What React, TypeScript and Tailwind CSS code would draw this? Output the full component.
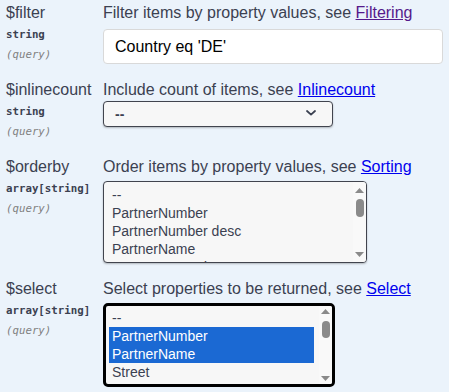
import React from "react";

function Up() {
  return (
    <svg width="9" height="5" viewBox="0 0 9 5" className="block">
      <path d="M4.5 0 L9 5 L0 5 Z" fill="#8a8a8a" />
    </svg>
  );
}
function Down() {
  return (
    <svg width="9" height="5" viewBox="0 0 9 5" className="block">
      <path d="M0 0 L9 0 L4.5 5 Z" fill="#8a8a8a" />
    </svg>
  );
}

function Left({ name, type, cls }: { name: string; type: string; cls?: string }) {
  return (
    <div className={"pl-[6px] " + (cls ?? "")}>
      <div className="text-[16px] leading-[18px] text-[#3b4151]">{name}</div>
      <div
        className="mt-[6px] text-[10.75px] leading-[13px] font-bold text-[#3b4151]"
        style={{ fontFamily: '"DejaVu Sans Mono", monospace' }}
      >
        {type}
      </div>
      <div
        className="mt-[7px] text-[10.75px] leading-[13px] italic text-[#808080]"
        style={{ fontFamily: '"DejaVu Sans Mono", monospace' }}
      >
        (query)
      </div>
    </div>
  );
}

function Desc({ text, link, visited }: { text: string; link: string; visited?: boolean }) {
  return (
    <div className="text-[16px] leading-[18px] text-[#3b4151] whitespace-nowrap">
      {text}
      <span className={visited ? "underline text-[#551a8b]" : "underline text-[#0000ee]"}>{link}</span>
    </div>
  );
}

export default function App() {
  const orderItems = ["--", "PartnerNumber", "PartnerNumber desc", "PartnerName", "PartnerName desc"];
  const selectItems = ["--", "PartnerNumber", "PartnerName", "Street", "City"];
  return (
    <div
      className="w-[449px] h-[392px] overflow-hidden bg-[#ebf3fb] pt-[4px]"
      style={{ fontFamily: '"Liberation Sans", Arial, sans-serif' }}
    >
      {/* $filter */}
      <div className="grid grid-cols-[103px_1fr] items-start">
        <Left name="$filter" type="string" />
        <div>
          <Desc text="Filter items by property values, see " link="Filtering" visited />
          <div className="mt-[7px] w-[340px] h-[35px] bg-white border border-[#d9d9d9] rounded-[4px] pl-[11px] flex items-center text-[16px] text-black">
            Country eq 'DE'
          </div>
        </div>
      </div>

      {/* $inlinecount */}
      <div className="grid grid-cols-[103px_1fr] items-start mt-[17px]">
        <Left name="$inlinecount" type="string" />
        <div>
          <Desc text="Include count of items, see " link="Inlinecount" />
          <div className="mt-[2px] w-[230px] h-[26px] bg-[#f7f7f7] border border-[#41444e] rounded-[4px] shadow-[0_1px_2px_0_rgba(0,0,0,0.25)] pl-[11px] pr-[16px] flex items-center justify-between">
            <span className="text-[14px] font-bold text-[#3b4151]">--</span>
            <svg width="10" height="6" viewBox="0 0 10 6" className="block -mt-[2px]">
              <path d="M1 1 L5 4.6 L9 1" stroke="#3b4151" strokeWidth="1.8" fill="none" strokeLinecap="round" strokeLinejoin="round" />
            </svg>
          </div>
        </div>
      </div>

      {/* $orderby */}
      <div className="grid grid-cols-[103px_1fr] items-start mt-[20px]">
        <Left name="$orderby" type="array[string]" />
        <div>
          <Desc text="Order items by property values, see " link="Sorting" />
          <div className="mt-[5px] w-[264px] h-[82px] bg-[#f7f7f7] border border-[#41444e] rounded-[4px] shadow-[0_1px_2px_0_rgba(0,0,0,0.25)] flex overflow-hidden">
            <div className="flex-1 pl-[5px] pt-[4px] mr-[5px] overflow-hidden">
              {orderItems.map((t) => (
                <div key={t} className="h-[18px] leading-[18px] px-[3px] text-[14px] text-[#3b4151] whitespace-nowrap">
                  {t}
                </div>
              ))}
            </div>
            <div className="w-[13px] flex flex-col items-center bg-[#f9f9f9] pt-[6px] pb-[5px]">
              <Up />
              <div className="mt-[6px] w-[8px] h-[18px] rounded-full bg-[#8a8a8a]" />
              <div className="mt-auto">
                <Down />
              </div>
            </div>
          </div>
        </div>
      </div>

      {/* $select */}
      <div className="grid grid-cols-[103px_1fr] items-start mt-[17px]">
        <Left name="$select" type="array[string]" />
        <div>
          <Desc text="Select properties to be returned, see " link="Select" />
          <div className="mt-[5px] w-[232px] h-[84px] bg-[#f7f7f7] border-[3px] border-black rounded-[5px] flex overflow-hidden">
            <div className="flex-1 pl-[3px] pt-[3px] mr-[5px] overflow-hidden">
              {selectItems.map((t, i) => (
                <div
                  key={t}
                  className={
                    i === 1 || i === 2
                      ? "h-[18px] leading-[18px] px-[3px] text-[14px] text-white bg-[#1b69d3] whitespace-nowrap"
                      : "h-[18px] leading-[18px] px-[3px] text-[14px] text-[#3b4151] whitespace-nowrap"
                  }
                >
                  {t}
                </div>
              ))}
            </div>
            <div className="w-[13px] flex flex-col items-center bg-[#f9f9f9] pt-[3px] pb-[3px]">
              <Up />
              <div className="mt-[7px] w-[8px] h-[17px] rounded-full bg-[#8a8a8a]" />
              <div className="mt-auto">
                <Down />
              </div>
            </div>
          </div>
        </div>
      </div>
    </div>
  );
}
